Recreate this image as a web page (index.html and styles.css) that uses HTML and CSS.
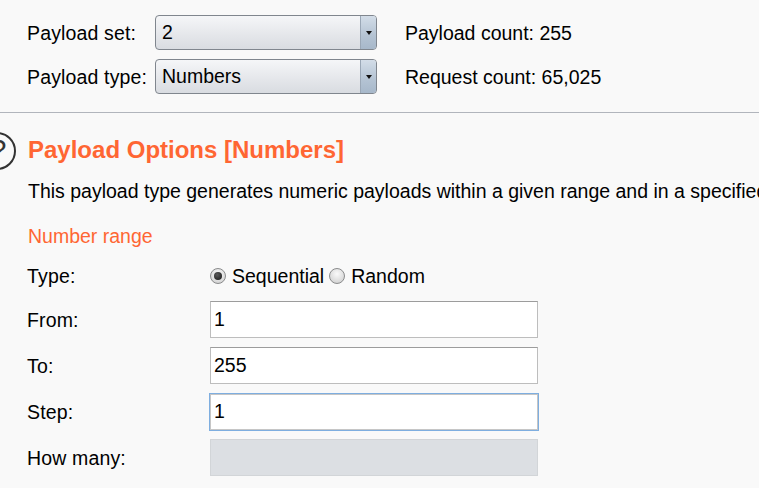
FILE: index.html
```html
<!DOCTYPE html>
<html lang="en">
<head>
<meta charset="utf-8">
<title>Payload Options</title>
<link rel="stylesheet" href="styles.css">
</head>
<body>
<div class="page">
  <section class="sets">
    <div class="set-grid">
      <span class="label">Payload set:</span>
      <div class="select"><span class="select-value">2</span><span class="select-btn"><span class="arrow"></span></span></div>
      <span class="info">Payload count: 255</span>
      <span class="label">Payload type:</span>
      <div class="select"><span class="select-value">Numbers</span><span class="select-btn"><span class="arrow"></span></span></div>
      <span class="info">Request count: 65,025</span>
    </div>
  </section>

  <section class="options">
    <div class="heading-row">
      <span class="help"><span class="help-mark">?</span></span>
      <h2 class="heading">Payload Options [Numbers]</h2>
    </div>
    <p class="desc">This payload type generates numeric payloads within a given range and in a specified format.</p>
    <h3 class="subheading">Number range</h3>
    <div class="form-grid">
      <span class="label top">Type:</span>
      <div class="radios">
        <span class="radio checked"></span><span class="radio-text">Sequential</span>
        <span class="radio"></span><span class="radio-text">Random</span>
      </div>
      <span class="label">From:</span>
      <div class="field">1</div>
      <span class="label">To:</span>
      <div class="field">255</div>
      <span class="label">Step:</span>
      <div class="field focused">1</div>
      <span class="label">How many:</span>
      <div class="field disabled"></div>
    </div>
  </section>
</div>
</body>
</html>
```
FILE: styles.css
```css
html, body {
  margin: 0;
  padding: 0;
}
body {
  background: #f9f9f9;
  font-family: "Liberation Sans", Arial, sans-serif;
  font-size: 19.5px;
  line-height: 24px;
  color: #000;
  overflow: hidden;
  width: 759px;
  height: 488px;
}
.page {
  width: 759px;
  overflow: hidden;
}
.sets {
  padding: 15px 0 18px 27px;
  border-bottom: 1px solid #b1b5bc;
}
.set-grid {
  display: grid;
  grid-template-columns: 128px 222px auto;
  grid-template-rows: 35px 35px;
  row-gap: 9px;
  align-items: center;
}
.info {
  margin-left: 28px;
  white-space: nowrap;
}
.label {
  white-space: nowrap;
  letter-spacing: 0.15px;
}
.select {
  height: 35px;
  box-sizing: border-box;
  border: 1px solid #80868e;
  border-radius: 4px;
  background: linear-gradient(#f5f6f8, #e4e6ea 60%, #d9dce1);
  display: flex;
  overflow: hidden;
}
.select-value {
  flex: 1;
  padding-left: 6px;
  line-height: 33px;
}
.select-btn {
  width: 15px;
  border-left: 1px solid #9aa7b6;
  background: linear-gradient(#d3dde8, #b4c3d3 60%, #a7b8ca);
  display: flex;
  align-items: center;
  justify-content: center;
}
.arrow {
  width: 0;
  height: 0;
  border-left: 3px solid transparent;
  border-right: 3px solid transparent;
  border-top: 4px solid #111;
}
.options {
  padding: 19px 0 0 28px;
}
.heading-row {
  display: flex;
  align-items: flex-start;
  gap: 12px;
  height: 38px;
}
.help {
  margin-left: -50px;
  width: 38px;
  height: 38px;
  box-sizing: border-box;
  border: 2px solid #333;
  border-radius: 50%;
  flex: none;
  display: flex;
  align-items: center;
  justify-content: center;
  color: #333;
}
.help-mark {
  font-size: 30px;
  line-height: 30px;
  margin-left: 2px;
  margin-top: -2px;
}
.heading {
  margin: 0;
  font-size: 24px;
  font-weight: bold;
  line-height: 36px;
  color: #ff6633;
  white-space: nowrap;
}
.desc {
  margin: 9px 0 0;
  white-space: nowrap;
}
.subheading {
  margin: 21px 0 0;
  font-size: 19.5px;
  font-weight: normal;
  color: #ff6633;
}
.form-grid {
  margin: 16px 0 0 -1px;
  display: grid;
  grid-template-columns: 183px 328px;
  grid-template-rows: 28px repeat(4, 37px);
  row-gap: 9px;
  align-items: center;
}
.label.top {
  align-self: start;
}
.radios {
  align-self: start;
  display: flex;
  align-items: center;
  height: 24px;
}
.radio {
  width: 16px;
  height: 16px;
  box-sizing: border-box;
  border: 1px solid #8a8b8c;
  border-radius: 50%;
  background: radial-gradient(circle at 50% 35%, #fafafa, #d4d4d4 80%);
  display: flex;
  align-items: center;
  justify-content: center;
  margin-right: 6px;
}
.radio.checked::after {
  content: "";
  width: 8px;
  height: 8px;
  border-radius: 50%;
  background: radial-gradient(circle at 40% 35%, #5a5a5a, #151515);
}
.radio-text {
  margin-right: 5px;
}
.field {
  height: 37px;
  box-sizing: border-box;
  border: 1px solid #bdbdbd;
  border-top-color: #9c9c9c;
  background: #fff;
  padding: 0 3px;
  line-height: 35px;
}
.field.focused {
  border: 1px solid #7eaee0;
  box-shadow: inset 0 0 0 1px #c6c6c6;
  margin-left: -1px;
  width: 330px;
  height: 38px;
  padding-left: 4px;
}
.field.disabled {
  background: #dcdfe3;
  border: 1px solid #d2d5d8;
}
```
